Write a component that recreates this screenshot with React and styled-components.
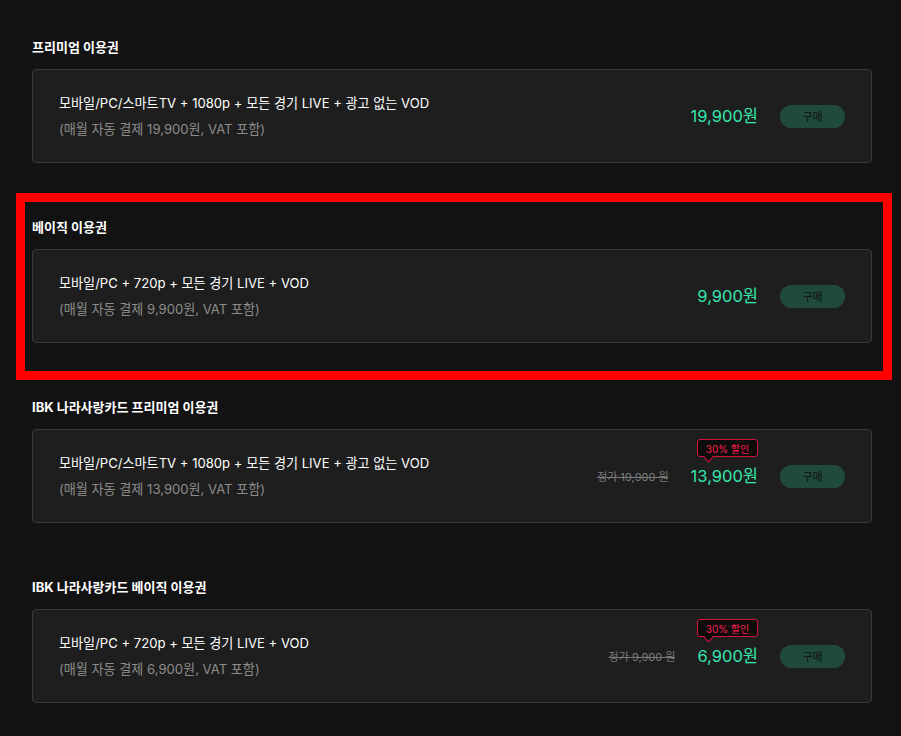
import React from 'react'
import styled, { createGlobalStyle } from 'styled-components'

const plans = [
  {
    title: '프리미엄 이용권',
    desc: '모바일/PC/스마트TV + 1080p + 모든 경기 LIVE + 광고 없는 VOD',
    sub: '(매월 자동 결제 19,900원, VAT 포함)',
    price: '19,900원',
  },
  {
    title: '베이직 이용권',
    desc: '모바일/PC + 720p + 모든 경기 LIVE + VOD',
    sub: '(매월 자동 결제 9,900원, VAT 포함)',
    price: '9,900원',
    highlighted: true,
  },
  {
    title: 'IBK 나라사랑카드 프리미엄 이용권',
    desc: '모바일/PC/스마트TV + 1080p + 모든 경기 LIVE + 광고 없는 VOD',
    sub: '(매월 자동 결제 13,900원, VAT 포함)',
    price: '13,900원',
    original: '정가 19,900 원',
    badge: '30% 할인',
  },
  {
    title: 'IBK 나라사랑카드 베이직 이용권',
    desc: '모바일/PC + 720p + 모든 경기 LIVE + VOD',
    sub: '(매월 자동 결제 6,900원, VAT 포함)',
    price: '6,900원',
    original: '정가 9,900 원',
    badge: '30% 할인',
  },
]

const App = () => {
  return (
    <>
      <GlobalStyle />
      <Page>
        {plans.map((p) => (
          <Section key={p.title} highlighted={p.highlighted}>
            <Title>{p.title}</Title>
            <Card>
              <Info>
                <Desc>{p.desc}</Desc>
                <Sub>{p.sub}</Sub>
              </Info>
              <Side>
                {p.original && <Original>{p.original}</Original>}
                <PriceWrap>
                  {p.badge && <Badge>{p.badge}</Badge>}
                  <Price>{p.price}</Price>
                </PriceWrap>
                <BuyButton>구매</BuyButton>
              </Side>
            </Card>
          </Section>
        ))}
      </Page>
    </>
  )
}

const GlobalStyle = createGlobalStyle`
    html, body {
        margin: 0;
        background: #121212;
        font-family: "Inter", "Noto Sans CJK KR", sans-serif;
    }
`

const Page = styled.div`
    width: 840px;
    padding: 37px 0 0 32px;
`

const Section = styled.section.withConfig({
  shouldForwardProp: (prop) => prop !== 'highlighted',
})`
    position: relative;
    margin-bottom: 54px;

    ${({ highlighted }) => highlighted && `
        &::after{
            content: '';
            position: absolute;
            inset: -24px -20px -37px -16px;
            border: 9px solid #ff0000;
            pointer-events: none;
        }
    `}
`

const Title = styled.h2`
    margin: 0 0 12px;
    font-size: 13px;
    line-height: 20px;
    font-weight: 700;
    color: #ffffff;
`

const Card = styled.div`
    box-sizing: border-box;
    height: 94px;
    display: flex;
    align-items: center;
    justify-content: space-between;
    padding: 0 26px 0 26px;
    background: #1e1e1e;
    border: 1px solid #3a3a3a;
    border-radius: 4px;
`

const Info = styled.div`
    display: flex;
    flex-direction: column;
    gap: 6px;
`

const Desc = styled.p`
    margin: 0;
    font-size: 13.1px;
    line-height: 20px;
    color: #ffffff;
`

const Sub = styled.p`
    margin: 0;
    font-size: 13.1px;
    line-height: 20px;
    color: #8c8c8c;
`

const Side = styled.div`
    display: flex;
    align-items: center;
`

const Original = styled.span`
    margin-right: 22px;
    font-size: 11px;
    color: #7a7a7a;
    text-decoration: line-through;
`

const PriceWrap = styled.div`
    position: relative;
`

const Price = styled.span`
    display: block;
    font-size: 16.5px;
    line-height: 22px;
    color: #34e6ae;
`

const Badge = styled.span`
    position: absolute;
    right: 0;
    bottom: calc(100% + 8px);
    box-sizing: border-box;
    width: 61px;
    height: 18px;
    display: flex;
    align-items: center;
    justify-content: center;
    font-size: 10px;
    color: #ff1f4f;
    background: #0c0c0c;
    border: 1px solid #d8123f;
    border-radius: 3px;
    white-space: nowrap;

    &::after{
        content: '';
        position: absolute;
        left: 7px;
        bottom: -5px;
        width: 6px;
        height: 6px;
        background: #0c0c0c;
        border-right: 1px solid #d8123f;
        border-bottom: 1px solid #d8123f;
        transform: rotate(45deg);
    }
`

const BuyButton = styled.button`
    margin-left: 22px;
    width: 65px;
    height: 23px;
    border: none;
    border-radius: 12px;
    background: #1f4a3c;
    color: #111111;
    font-family: inherit;
    font-size: 11px;
    padding: 0;
    cursor: pointer;
`

export default App
